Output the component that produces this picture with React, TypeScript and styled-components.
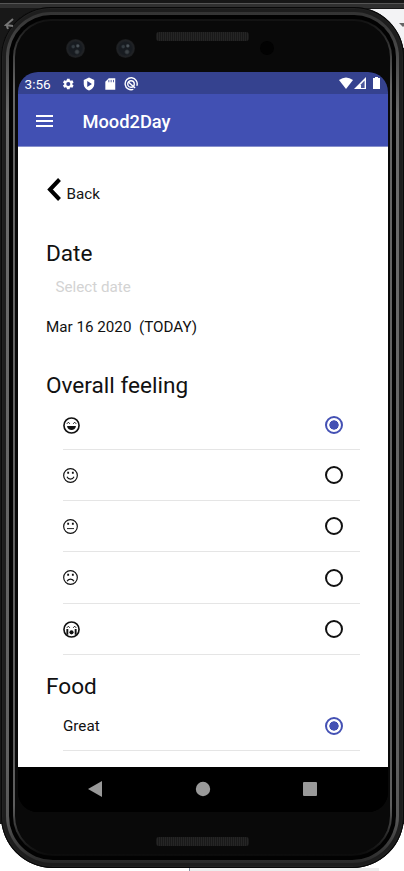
import React from 'react';
import styled, { createGlobalStyle } from 'styled-components';

const Global = createGlobalStyle`
  *, *::before, *::after { box-sizing: border-box; }
  body { margin: 0; background: #fff; }
`;

const Desktop = styled.main`
  position: relative;
  width: 404px;
  height: 871px;
  padding: 7px 0 3px 1px;
  overflow: hidden;
  background: linear-gradient(#161616 0 3px, #555 3px 4px, #303030 4px 8px, #181818 8px 830px, #fff 830px);
  font-family: Roboto, sans-serif;
  color: #111;
`;

const CornerPanel = styled.div`
  position: absolute;
  top: 9px;
  right: 0;
  width: 44px;
  height: 39px;
  background: #f3f3f5;
`;

const LowerPanel = styled.div<{ $side: 'left' | 'right' }>`
  position: absolute;
  top: 824px;
  ${p => p.$side}: 0;
  width: 60px;
  height: 47px;
  background: #fff;
`;

const Smudge = styled.div`
  position: absolute;
  left: 189px;
  bottom: 0;
  width: 190px;
  height: 3px;
  border-left: 1px solid #8793a5;
  background: #ededed;
`;

const ToolArrow = styled.svg<{ $side: 'left' | 'right' }>`
  position: absolute;
  top: 18px;
  ${p => p.$side}: ${p => (p.$side === 'left' ? '4px' : '-5px')};
  width: 10px;
  height: 12px;
  z-index: 2;
`;

const Shell = styled.div`
  position: relative;
  width: 403px;
  height: 861px;
  padding: 5px;
  border-radius: 50px 50px 52px 52px;
  background: #1d1d1d;
  box-shadow: inset 0 0 0 1px #080808, inset 0 0 0 2px #222;
`;

const OuterRim = styled.div`
  height: 100%;
  padding: 3px;
  border-radius: 45px 45px 47px 47px;
  background: linear-gradient(#333 0, #464646 4%, #6c6c6c 12%, #606060 88%, #555 95%, #292929 100%);
`;

const Groove = styled.div`
  height: 100%;
  padding: 4px;
  border-radius: 42px 42px 44px 44px;
  background: #020202;
`;

const InnerRim = styled.div`
  height: 100%;
  padding: 2px;
  border-radius: 38px 38px 40px 40px;
  background: linear-gradient(#111 0, #333 3%, #666 8%, #5d5d5d 94%, #222 98%, #0a0a0a 100%);
`;

const Face = styled.div`
  display: flex;
  flex-direction: column;
  align-items: center;
  width: 375px;
  height: 833px;
  border-radius: 36px 36px 38px 38px;
  background: #090909;
`;

const TopHardware = styled.div`
  position: relative;
  width: 100%;
  height: 51px;
  flex: none;
`;

const Speaker = styled.div`
  width: 93px;
  height: 9px;
  border-radius: 3px;
  background: repeating-linear-gradient(90deg, #191919 0 1px, #252525 1px 2px);
`;

const TopSpeaker = styled(Speaker)`
  position: absolute;
  left: 141px;
  top: 11px;
`;

const Lens = styled.span<{ $x: number; $plain?: boolean }>`
  position: absolute;
  left: ${p => p.$x}px;
  top: ${p => (p.$plain ? 20 : 18)}px;
  width: ${p => (p.$plain ? 14 : 19)}px;
  height: ${p => (p.$plain ? 14 : 19)}px;
  border-radius: 50%;
  background: ${p =>
    p.$plain
      ? '#020202'
      : 'radial-gradient(circle at 62% 36%, #4b5359 0 5%, transparent 13%), radial-gradient(circle at 38% 40%, #343c42 0 6%, transparent 14%), radial-gradient(circle at 58% 68%, #3c4246 0 7%, transparent 17%), radial-gradient(#171b20 45%, #202225 60%, #18191b 72%)'};
`;

const BottomSpeaker = styled(Speaker)`
  margin-top: 25px;
`;

const Screen = styled.div`
  display: flex;
  flex-direction: column;
  width: 370px;
  height: 740px;
  flex: none;
  overflow: hidden;
  border-radius: 20px;
  background: #000;
`;

const StatusBar = styled.header`
  display: flex;
  align-items: center;
  height: 22px;
  flex: none;
  padding: 1px 7px 0;
  background: #35428f;
  color: #fff;
`;

const Time = styled.time`
  width: 36px;
  font-size: 13.6px;
  line-height: 22px;
`;

const StatusIcons = styled.div`
  display: flex;
  gap: 7px;
  svg { width: 14px; height: 14px; }
`;

const Signals = styled.div`
  display: flex;
  margin: 0 -1px 1px auto;
  svg { width: 50px; height: 14px; }
`;

const AppBar = styled.div`
  display: flex;
  align-items: center;
  height: 53px;
  flex: none;
  padding: 2px 0 0 18px;
  gap: 30px;
  background: #4150b3;
  border-bottom: 1px solid #8790cb;
  color: #fff;
`;

const MenuIcon = styled.svg`
  width: 17px;
  height: 14px;
`;

const AppTitle = styled.h1`
  margin: 2px 0 0;
  font-size: 18.3px;
  line-height: 24px;
  font-weight: 500;
`;

const Content = styled.section`
  display: flex;
  flex-direction: column;
  flex: 1;
  padding: 30px 28px 0;
  background: #fff;
`;

const BackButton = styled.button`
  display: flex;
  align-items: flex-start;
  height: 36px;
  padding: 0;
  border: 0;
  background: none;
  color: #151515;
  font: 15.2px/34px Roboto, sans-serif;
  svg { width: 15px; height: 24px; margin: 1px 5px 0 1px; }
`;

const SectionTitle = styled.h2<{ $top: number }>`
  margin: ${p => p.$top}px 0 0 0.5px;
  font-size: 22.6px;
  font-weight: 400;
  line-height: 30px;
  color: #111;
`;

const DatePlaceholder = styled.div`
  padding-left: 10px;
  margin-top: 8px;
  font-size: 15.2px;
  line-height: 20px;
  color: #d3d3d3;
`;

const DateValue = styled.div`
  margin: 20px 0 0 0.5px;
  font-size: 15.2px;
  line-height: 20px;
  white-space: pre;
`;

const Options = styled.div`
  display: flex;
  flex-direction: column;
  margin-left: 17px;
`;

const Option = styled.label<{ $height: number }>`
  display: flex;
  align-items: center;
  justify-content: space-between;
  height: ${p => p.$height}px;
  padding-right: 17px;
  border-bottom: 1px solid #e5e5e5;
  font-size: 15.2px;
`;

const OptionText = styled.span`
  margin-left: 0.5px;
`;

const FaceIcon = styled.svg<{ $large?: boolean }>`
  width: ${p => (p.$large ? 17 : 15)}px;
  height: ${p => (p.$large ? 17 : 15)}px;
  overflow: visible;
`;

const Radio = styled.input`
  display: grid;
  place-items: center;
  appearance: none;
  width: 18px;
  height: 18px;
  margin: 0;
  border: 2px solid #111;
  border-radius: 50%;
  &:checked { border-color: #4451b4; }
  &:checked::before {
    content: '';
    width: 10px;
    height: 10px;
    border-radius: 50%;
    background: radial-gradient(circle, #4451b4 4.4px, transparent 5px);
  }
`;

const Navigation = styled.nav`
  display: grid;
  grid-template-columns: 1fr 60px 1fr;
  align-items: center;
  justify-items: center;
  height: 45px;
  flex: none;
  padding: 0 0 2px;
  background: #000;
  svg { width: 16px; height: 16px; fill: #999; }
`;

type Mood = 'laugh' | 'smile' | 'neutral' | 'sad' | 'cry';
const moods: Mood[] = ['laugh', 'smile', 'neutral', 'sad', 'cry'];
const rowHeights = [49, 51, 51, 52, 51];

function MoodFace({ mood }: { mood: Mood }) {
  const large = mood === 'laugh' || mood === 'cry';
  return (
    <FaceIcon $large={large} viewBox="0 0 18 18" fill="none" stroke="#111" strokeWidth={large ? 1.7 : 1.4}>
      <circle cx="9" cy="9" r={large ? 8 : 8.2} />
      {large ? (
        <path d="M4 7.3 5.7 5.5 7.2 7.2M10.8 7.2 12.4 5.5 14 7.3" strokeWidth="1" />
      ) : (
        <path d="M6.2 4.6v2.4M11.8 4.6v2.4" strokeWidth="2.2" />
      )}
      {mood === 'laugh' && <path d="M4.3 9.5h9.4c-.2 5.6-9.2 5.6-9.4 0Z" fill="#111" stroke="none" />}
      {mood === 'smile' && <path d="M4.8 10.6c1.6 3.7 6.8 3.7 8.4 0" />}
      {mood === 'neutral' && <path d="M4.8 11.5h8.4" strokeWidth="1.1" />}
      {mood === 'sad' && <path d="M5 13.5c1.2-3.5 6.8-3.5 8 0" strokeWidth="1.6" />}
      {mood === 'cry' && (
        <>
          <path d="M4.6 8.5v6M13.4 8.5v6" strokeWidth="2" />
          <circle cx="9" cy="12" r="2.2" fill="#111" stroke="none" />
        </>
      )}
    </FaceIcon>
  );
}

export default function App() {
  return (
    <>
      <Global />
      <Desktop>
        <CornerPanel />
        <LowerPanel $side="left" />
        <LowerPanel $side="right" />
        <Smudge />
        <ToolArrow $side="left" viewBox="0 0 10 12" fill="none" stroke="#777" strokeWidth="2">
          <path d="M9 1 2 7l7 1M2 6l2 5" />
        </ToolArrow>
        <Shell>
          <OuterRim>
            <Groove>
              <InnerRim>
                <Face>
                  <TopHardware>
                    <Lens $x={51} />
                    <Lens $x={101} />
                    <TopSpeaker />
                    <Lens $x={245} $plain />
                  </TopHardware>
                  <Screen>
                    <StatusBar>
                      <Time>3:56</Time>
                      <StatusIcons>
                        <svg viewBox="0 0 24 24" fill="#fff"><path d="M19.4 13a8 8 0 0 0 0-2l2.2-1.7-2.1-3.7-2.7 1a8 8 0 0 0-1.6-.9L14.8 3h-4.6l-.4 2.7a8 8 0 0 0-1.6.9l-2.7-1-2.1 3.7L5.6 11a8 8 0 0 0 0 2l-2.2 1.7 2.1 3.7 2.7-1a8 8 0 0 0 1.6.9l.4 2.7h4.6l.4-2.7a8 8 0 0 0 1.6-.9l2.7 1 2.1-3.7L19.4 13ZM12.5 15.5a3.5 3.5 0 1 1 0-7 3.5 3.5 0 0 1 0 7Z" /></svg>
                        <svg viewBox="0 0 24 24"><path d="M12 1 3 5v7c0 5 3.8 9.7 9 11 5.2-1.3 9-6 9-11V5Z" fill="#fff" /><path d="m9 7 8 5-8 5Z" fill="#35428f" /></svg>
                        <svg viewBox="0 0 24 24"><path d="M10 2 4 8v14h17V2Z" fill="#fff" /><path d="M10 5v4m4-4v4m4-4v4" stroke="#35428f" strokeWidth="1.4" /></svg>
                        <svg viewBox="0 0 24 24" fill="none" stroke="#fff" strokeWidth="2.4"><path d="M16 21.2A10.3 10.3 0 1 1 22 15" /><circle cx="12" cy="12" r="5.6" /><path d="m7 8 12 11" /></svg>
                      </StatusIcons>
                      <Signals>
                        <svg viewBox="0 0 50 14" fill="#fff">
                          <path d="M7 4Q14-1 21 4l-7 9Z" />
                          <path d="M22 13 34 1v12Z" />
                          <path d="M29 8.2 32.6 4.5V12H29Z" fill="#4e599d" />
                          <path d="M41 2h2V1h3v1h2v11h-7Z" />
                        </svg>
                      </Signals>
                    </StatusBar>
                    <AppBar>
                      <MenuIcon viewBox="0 0 17 14" stroke="#fff" strokeWidth="2"><path d="M0 2h17M0 7h17M0 12h17" /></MenuIcon>
                      <AppTitle>Mood2Day</AppTitle>
                    </AppBar>
                    <Content>
                      <BackButton>
                        <svg viewBox="0 0 15 24" fill="none" stroke="#000" strokeWidth="4"><path d="M12.5 1.5 3 11.5l9.5 10" /></svg>
                        Back
                      </BackButton>
                      <SectionTitle $top={26}>Date</SectionTitle>
                      <DatePlaceholder>Select date</DatePlaceholder>
                      <DateValue>{'Mar 16 2020  (TODAY)'}</DateValue>
                      <SectionTitle $top={34}>Overall feeling</SectionTitle>
                      <Options>
                        {moods.map((mood, i) => (
                          <Option key={mood} $height={rowHeights[i]}>
                            <MoodFace mood={mood} />
                            <Radio type="radio" name="feeling" defaultChecked={i === 0} />
                          </Option>
                        ))}
                      </Options>
                      <SectionTitle $top={17}>Food</SectionTitle>
                      <Options>
                        <Option $height={49}>
                          <OptionText>Great</OptionText>
                          <Radio type="radio" name="food" defaultChecked />
                        </Option>
                      </Options>
                    </Content>
                    <Navigation>
                      <svg viewBox="0 0 16 16"><path d="M15 0v16L1 8Z" /></svg>
                      <svg viewBox="0 0 16 16"><circle cx="8" cy="8" r="7.2" /></svg>
                      <svg viewBox="0 0 16 16"><rect x="1" y="1" width="14" height="14" rx="1" /></svg>
                    </Navigation>
                  </Screen>
                  <BottomSpeaker />
                </Face>
              </InnerRim>
            </Groove>
          </OuterRim>
        </Shell>
        <ToolArrow $side="right" viewBox="0 0 10 12"><path d="M0 5h8l-4 4Z" fill="#666" /></ToolArrow>
      </Desktop>
    </>
  );
}
